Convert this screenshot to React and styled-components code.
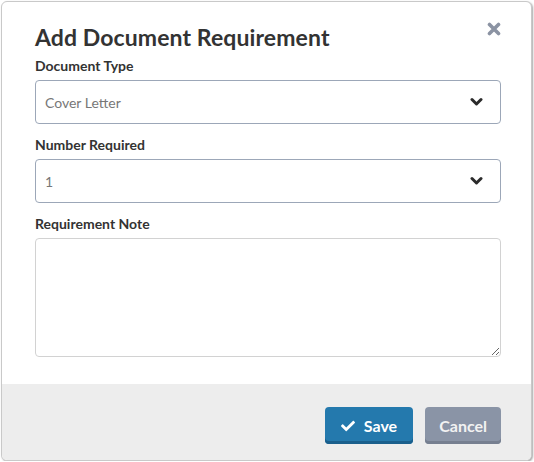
import React from "react";
import styled, { createGlobalStyle } from "styled-components";
import { FaCheck } from "react-icons/fa";

const Global = createGlobalStyle`
  html, body { margin: 0; padding: 0; background: #ffffff; }
  body { font-family: Lato, "Open Sans", sans-serif; }
  * { box-sizing: border-box; }
`;

const Modal = styled.div`
  margin: 1px 0 0 1px;
  width: 531px;
  height: 460px;
  border: 1px solid #c9c9c9;
  border-radius: 6px;
  box-shadow: 1px 1px 2px rgba(0, 0, 0, 0.35);
  background: #fff;
  display: flex;
  flex-direction: column;
  overflow: hidden;
`;

const Body = styled.div`
  position: relative;
  flex: 1;
  padding: 21px 30px 0 33px;
  display: flex;
  flex-direction: column;
`;

const Title = styled.h2`
  margin: 0 0 5px 0;
  font-family: Lato, sans-serif;
  font-weight: 700;
  font-size: 23px;
  line-height: 28px;
  color: #333;
  letter-spacing: 0.1px;
`;

const Close = styled.button`
  position: absolute;
  top: 20px;
  right: 30px;
  border: none;
  background: transparent;
  padding: 0;
  color: #8b93a3;
  line-height: 0;
  cursor: pointer;
`;

const Field = styled.div`
  display: flex;
  flex-direction: column;
  margin-bottom: ${(p) => p.$mb ?? 11}px;
`;

const Label = styled.label`
  font-weight: 700;
  font-size: 14px;
  line-height: 20px;
  color: #333;
  margin-bottom: 4px;
`;

const SelectWrap = styled.div`
  position: relative;
`;

const Select = styled.select`
  appearance: none;
  -webkit-appearance: none;
  width: 100%;
  height: 44px;
  border: 1px solid #9ca7b8;
  border-radius: 4px;
  background: #fff;
  padding: 0 40px 0 9px;
  font-family: Lato, sans-serif;
  font-size: 14px;
  color: #777;
  outline: none;
`;

const Chevron = styled.svg`
  position: absolute;
  right: 18px;
  top: 50%;
  transform: translateY(-50%);
  pointer-events: none;
`;

const TextArea = styled.textarea`
  width: 100%;
  height: 119px;
  border: 1px solid #d2d2d2;
  border-radius: 4px;
  padding: 8px 10px;
  font-family: Lato, sans-serif;
  font-size: 14px;
  color: #555;
  resize: vertical;
  outline: none;
`;

const Footer = styled.div`
  height: 76px;
  background: #ededed;
  display: flex;
  justify-content: flex-end;
  align-items: flex-start;
  gap: 12px;
  padding: 23px 30px 0 0;
`;

const Button = styled.button`
  height: 37px;
  border: none;
  border-radius: 4px;
  padding: 0 ${(p) => p.$px}px;
  background: ${(p) => p.$bg};
  box-shadow: inset 0 -3px 0 ${(p) => p.$shade};
  color: ${(p) => p.$fg};
  font-family: Lato, sans-serif;
  font-weight: 700;
  font-size: 16px;
  display: flex;
  align-items: center;
  gap: 9px;
  cursor: pointer;
`;

const CheckIcon = styled(FaCheck)`
  font-size: 14px;
`;

function ChevronDown() {
  return (
    <Chevron width="13" height="9" viewBox="0 0 13 9" aria-hidden="true">
      <path
        d="M2 2 L6.5 6.5 L11 2"
        fill="none"
        stroke="#2b2b2b"
        strokeWidth="3"
        strokeLinecap="round"
        strokeLinejoin="round"
      />
    </Chevron>
  );
}

function CloseIcon() {
  return (
    <svg width="14" height="14" viewBox="0 0 14 14" aria-hidden="true">
      <path
        d="M2.5 2.5 L11.5 11.5 M11.5 2.5 L2.5 11.5"
        fill="none"
        stroke="#8b93a3"
        strokeWidth="3.6"
        strokeLinecap="round"
      />
    </svg>
  );
}

export default function App() {
  return (
    <>
      <Global />
      <Modal>
        <Body>
          <Close aria-label="Close">
            <CloseIcon />
          </Close>
          <Title>Add Document Requirement</Title>
          <Field>
            <Label>Document Type</Label>
            <SelectWrap>
              <Select defaultValue="Cover Letter">
                <option>Cover Letter</option>
                <option>Resume</option>
              </Select>
              <ChevronDown />
            </SelectWrap>
          </Field>
          <Field>
            <Label>Number Required</Label>
            <SelectWrap>
              <Select defaultValue="1">
                <option>1</option>
                <option>2</option>
                <option>3</option>
              </Select>
              <ChevronDown />
            </SelectWrap>
          </Field>
          <Field $mb={0}>
            <Label>Requirement Note</Label>
            <TextArea />
          </Field>
        </Body>
        <Footer>
          <Button $bg="#2479ad" $shade="#1a5f8c" $fg="#fff" $px={16}>
            <CheckIcon />
            Save
          </Button>
          <Button $bg="#8a94a6" $shade="#767f90" $fg="#f2f2f2" $px={14}>
            Cancel
          </Button>
        </Footer>
      </Modal>
    </>
  );
}
